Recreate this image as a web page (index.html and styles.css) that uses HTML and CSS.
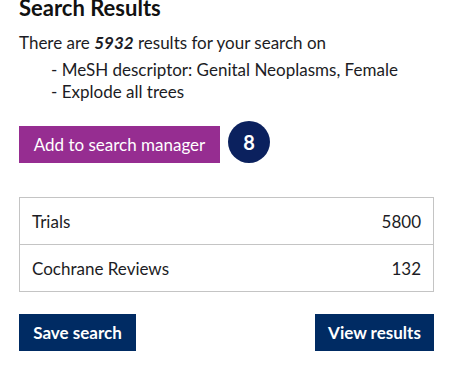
FILE: index.html
```html
<!DOCTYPE html>
<html>
<head>
<meta charset="utf-8">
<link rel="stylesheet" href="styles.css">
</head>
<body>
<div class="panel">
  <h2 class="title">Search Results</h2>
  <p class="summary">There are <strong><em>5932</em></strong> results for your search on</p>
  <ul class="criteria">
    <li>- MeSH descriptor: Genital Neoplasms, Female</li>
    <li>- Explode all trees</li>
  </ul>
  <div class="add-row">
    <button class="btn btn-purple">Add to search manager</button>
    <span class="badge">8</span>
  </div>
  <div class="table">
    <div class="row"><span>Trials</span><span>5800</span></div>
    <div class="row"><span>Cochrane Reviews</span><span>132</span></div>
  </div>
  <div class="actions">
    <button class="btn btn-navy btn-save">Save search</button>
    <button class="btn btn-navy btn-view">View results</button>
  </div>
</div>
</body>
</html>
```

FILE: styles.css
```css
html, body {
  margin: 0;
  padding: 0;
  background: #ffffff;
}
body {
  font-family: Lato, "Noto Sans", sans-serif;
  color: #1c1c24;
}
.panel {
  width: 415px;
  padding-left: 19px;
}
.title {
  margin: -5px 0 0 0;
  font-size: 22px;
  line-height: 26px;
  font-weight: 700;
  color: #111;
}
.summary {
  margin: 10px 0 0 0;
  font-size: 17px;
  line-height: 24px;
}
.criteria {
  list-style: none;
  margin: 4px 0 0 0;
  padding: 0 0 0 32px;
  font-size: 17px;
  line-height: 22px;
}
.add-row {
  display: flex;
  align-items: center;
  gap: 8px;
  margin-top: 23px;
}
.btn {
  font-family: Lato, "Noto Sans", sans-serif;
  border: none;
  color: #fff;
  font-size: 17px;
  height: 37px;
  padding: 0;
  white-space: nowrap;
  cursor: pointer;
}
.btn-purple {
  background: #962d91;
  width: 201px;
}
.badge {
  width: 42px;
  height: 42px;
  border-radius: 50%;
  background: #0b215e;
  color: #fff;
  display: flex;
  align-items: center;
  justify-content: center;
  font-size: 20px;
  font-weight: 700;
  margin-top: -6px;
}
.table {
  margin-top: 34px;
  border: 1.5px solid #c4c4c4;
}
.row {
  display: flex;
  justify-content: space-between;
  align-items: center;
  height: 46px;
  padding: 0 12px;
  font-size: 17px;
}
.row + .row {
  border-top: 1.5px solid #c4c4c4;
}
.actions {
  display: flex;
  justify-content: space-between;
  margin-top: 22px;
}
.btn-navy {
  background: #002b63;
  font-weight: 700;
}
.btn-save {
  width: 117px;
}
.btn-view {
  width: 119px;
}
```
